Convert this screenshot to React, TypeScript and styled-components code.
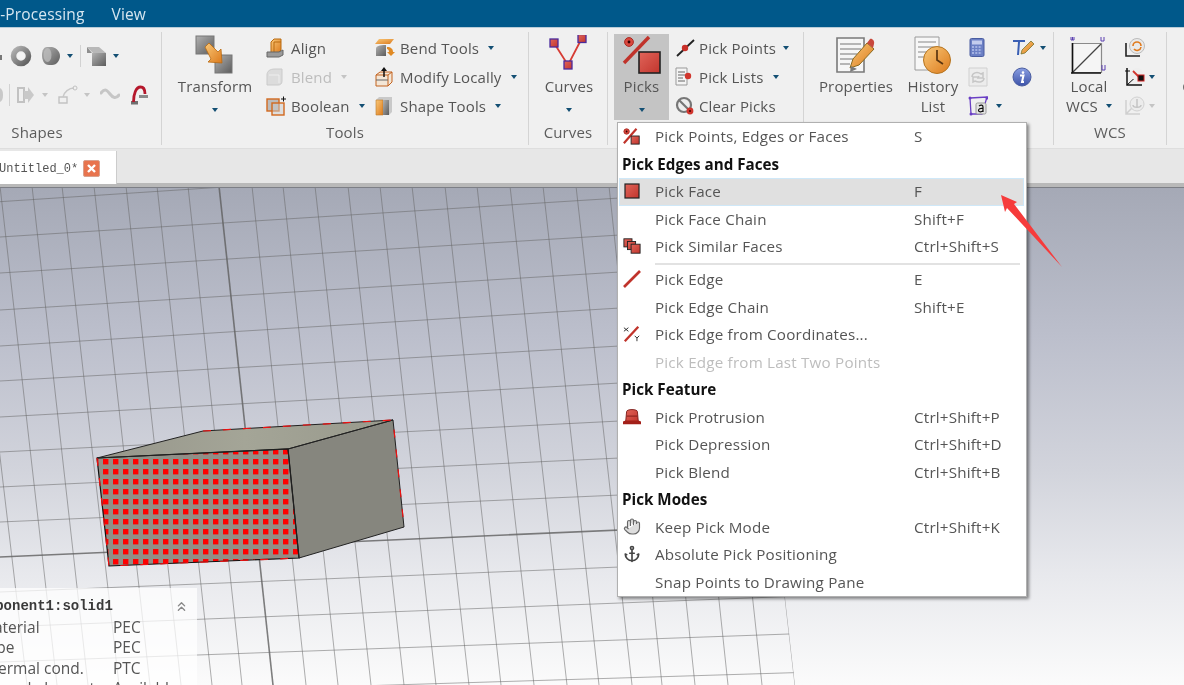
import React from 'react';
import styled, { createGlobalStyle } from 'styled-components';
import { Anchor, ChevronsUp, Hand } from 'lucide-react';

const Global = createGlobalStyle`
  html, body { margin: 0; padding: 0; height: 100%; overflow: hidden; background: #f0f0f0; }
  body { font-family: "Open Sans", "Noto Sans", "Liberation Sans", sans-serif; }
  * { box-sizing: border-box; }
`;

const Page = styled.div`
  position: relative; width: 100%; height: 100vh; overflow: hidden; filter: blur(0.3px);
  display: flex; flex-direction: column; font-size: 15px; letter-spacing: 0.15px; color: #555;
`;
const Defs = styled.svg`width: 0; height: 0; flex: none;`;
const MenuBar = styled.div`
  height: 28px; flex: none; background: #00588a; border-bottom: 1px solid #b8ccd8;
  display: flex; align-items: center; color: #d6e6f0; font-size: 15.5px; margin-left: -32px; gap: 27px; white-space: nowrap;
`;
const Ribbon = styled.div`
  height: 120px; flex: none; background: #f0f0f0; display: flex; padding: 4px 0 3px; overflow: hidden;
`;
const Group = styled.div<{ $w: number; $ml?: number }>`
  flex: none; width: ${p => p.$w}px; margin-left: ${p => p.$ml ?? 0}px;
  border-right: 1px solid #d4d4d4; display: flex; flex-direction: column;
`;
const Content = styled.div<{ $pl?: number }>`
  height: 88px; flex: none; padding: 2px 0 0 ${p => p.$pl ?? 0}px; display: flex; position: relative;
`;
const GroupLabel = styled.div`
  height: 21px; line-height: 21px; margin-top: 2px; text-align: center; color: #5c5c5c;
`;
const Large = styled.div<{ $w: number; $ml?: number; $active?: boolean }>`
  flex: none; width: ${p => p.$w}px; height: 86px; margin-left: ${p => p.$ml ?? 0}px;
  background: ${p => (p.$active ? '#c4c4c4' : 'transparent')};
  display: flex; flex-direction: column; align-items: center; white-space: nowrap;
`;
const LargeIcon = styled.div`height: 42px; flex: none; display: flex; align-items: center; justify-content: center;`;
const LargeText = styled.div`height: 20px; line-height: 20px; flex: none; display: flex; align-items: center; gap: 8px;`;
const CaretBox = styled.div`height: 28px; flex: none; display: flex; align-items: center;`;
const Caret = styled.span<{ $off?: boolean; $ml?: number }>`
  flex: none; display: inline-block; width: 0; height: 0; margin-left: ${p => p.$ml ?? 0}px;
  border-left: 3.5px solid transparent; border-right: 3.5px solid transparent;
  border-top: 4px solid ${p => (p.$off ? '#c4c4c4' : '#134f73')};
`;
const SmallCol = styled.div<{ $w: number; $ml?: number }>`
  flex: none; width: ${p => p.$w}px; margin-left: ${p => p.$ml ?? 0}px; margin-top: -1px; display: flex; flex-direction: column;
`;
const SmallRow = styled.div<{ $off?: boolean; $gap?: number }>`
  height: 29px; flex: none; display: flex; align-items: center; gap: ${p => p.$gap ?? 7}px; white-space: nowrap;
  color: ${p => (p.$off ? '#bdbdbd' : '#555')};
  svg { flex: none; }
`;
const ShapeRows = styled.div`display: flex; flex-direction: column; gap: 16px; padding-top: 10px;`;
const ShapeRow = styled.div`display: flex; align-items: center; height: 23px;`;
const Spot = styled.span<{ $ml?: number }>`display: flex; flex: none; margin-left: ${p => p.$ml ?? 0}px;`;
const ThinSep = styled.span<{ $ml: number }>`flex: none; width: 1px; height: 22px; background: #d2d2d2; margin-left: ${p => p.$ml}px;`;
const TabBar = styled.div`
  height: 39px; flex: none; background: #e7e7e7; border-top: 1px solid #dedede; padding-top: 2px;
  border-bottom: 4px solid #b9b9b9; display: flex; align-items: flex-start;
`;
const Tab = styled.div`
  width: 117px; height: 33px; padding-top: 2px; background: #fff; display: flex; align-items: center; overflow: hidden; flex: none;
  font-family: "Liberation Mono", monospace; font-size: 12px; letter-spacing: 0; color: #555; border-right: 1px solid #ccc;
`;
const TabTitle = styled.span`margin-left: -1px; flex: none; width: 84px; white-space: nowrap;`;
const TabClose = styled.span`
  width: 17px; height: 17px; background: #e8744e; border: 1px solid #d9a18e; border-radius: 2px;
  display: flex; align-items: center; justify-content: center; flex: none;
`;
const View3D = styled.div`
  flex: 1; position: relative; overflow: hidden; border-top: 1px solid #7d7f86;
  background: linear-gradient(#a5a9b6 0%, #bcbfcc 30%, #d2d4dc 57%, #e8e9ed 78%, #fbfbfb 100%);
`;
const Scene = styled.svg`position: absolute; inset: 0; width: 100%; height: 100%;`;
const InfoPanel = styled.div`
  position: absolute; left: 0; top: 400px; bottom: 0; width: 197px; background: rgba(255,255,255,.74);
  overflow: hidden; padding-top: 9px; color: #555; font-size: 15.5px; letter-spacing: 0;
`;
const InfoTitle = styled.div`
  height: 18px; display: flex; align-items: center; justify-content: space-between; margin-left: -30px; padding-right: 8px;
  font-family: "Liberation Mono", monospace; font-weight: 700; font-size: 14px; color: #3a3a3a; margin-bottom: 2px; white-space: nowrap;
`;
const InfoRow = styled.div`height: 20.3px; line-height: 20.3px; display: grid; grid-template-columns: 133px 1fr; margin-left: -20px; white-space: nowrap;`;
const PopMenu = styled.div`
  position: absolute; left: 617px; top: 122px; width: 410px; height: 475px; background: #fff; border: 1px solid #b0b0b0;
  box-shadow: 2px 2px 3px rgba(0,0,0,.45); color: #555; font-size: 15.2px; letter-spacing: 0.2px;
`;
const MenuRow = styled.div<{ $sel?: boolean; $off?: boolean }>`
  height: 27.5px; margin: 0 2px 0 1px; padding-bottom: 1px; display: grid; grid-template-columns: 35px 259px 1fr; align-items: center; white-space: nowrap;
  border: 1px solid ${p => (p.$sel ? '#cfe8f8' : 'transparent')};
  background: ${p => (p.$sel ? '#e0e0e0' : 'transparent')};
  color: ${p => (p.$off ? '#bdbdbd' : '#555')};
`;
const MenuHead = styled.div`height: 27.5px; line-height: 27.5px; padding-left: 4px; font-weight: 700; color: #111; letter-spacing: 0;`;
const MenuIcon = styled.span`display: flex; margin-left: 3px; width: 18px; height: 18px; align-items: center; justify-content: center;`;
const MenuSep = styled.div`height: 2px; margin: 2px 6px 1.5px 37px; background: #e2e2e2;`;
const Arrow = styled.svg`position: absolute; left: 995px; top: 190px; width: 72px; height: 82px;`;

const S = ({ w, h, children }: { w: number; h: number; children: React.ReactNode }) => (
  <svg width={w} height={h} viewBox={`0 0 ${w} ${h}`}>{children}</svg>
);

const sq = (x: number, y: number) => (
  <rect x={x - 4} y={y - 4} width={8} height={8} fill="url(#gRed)" stroke="#4a2a9c" strokeWidth={1.3} />
);

const Partial1 = () => <S w={2} h={8}><rect width={2} height={5} y={3} fill="#777" /></S>;
const Partial2 = () => <S w={3} h={16}><path d="M0 1c2 1 3 3 3 7s-1 6-3 7z" fill="#c8c8c8" /></S>;
const Torus = () => <S w={22} h={22}><circle cx={11} cy={11} r={7.5} fill="none" stroke="url(#gGray)" strokeWidth={5.5} /><circle cx={11} cy={11} r={3.6} fill="#f4f4f4" /></S>;
const Cyl = () => <S w={19} h={22}><path d="M5 2h5c5 1 8 5 8 9s-3 9-8 9H7C2 20 0 15 0 10 0 5 2 2 5 2z" fill="url(#gGray)" /><ellipse cx={5.500} cy={10} rx={4} ry={7} fill="#bdbdbd" opacity={0.75} /></S>;
const Cube = () => <S w={20} h={22}><path d="M0 2h12l7 6H6z" fill="#b8b8b8" /><path d="M5 8h14v13H5z" fill="url(#gGray)" /><path d="M0 2l5 6v0H0z" fill="#8f8f8f" /></S>;
const Extrude = () => <S w={18} h={20}><path d="M1 3h6v14H1z" fill="none" stroke="#c2c2c2" strokeWidth={2} /><path d="M7 6h4V2l6 8-6 8v-4H7z" fill="#c9c9c9" /></S>;
const Loft = () => <S w={20} h={20}><path d="M1 12h8v6H1z" fill="none" stroke="#c2c2c2" strokeWidth={1.4} /><path d="M5 12c1-5 6-9 11-9" fill="none" stroke="#c8c8c8" strokeWidth={1.4} /><circle cx={17} cy={3} r={2} fill="none" stroke="#c2c2c2" /></S>;
const Wave = () => <S w={20} h={14}><path d="M1 5c4-5 6-3 9 1s6 5 9 1" fill="none" stroke="#c6c6c6" strokeWidth={3} strokeLinecap="round" /></S>;
const RedArc = () => <S w={18} h={20}><path d="M9 10h9v3H9z" fill="#8a8a8a" /><path d="M1 16h7v3.500H1z" fill="#6f6f6f" /><path d="M3.500 17C3.500 9 6 2 10.500 2c3.500 0 4.500 3 4.500 7" fill="none" stroke="#b5172b" strokeWidth={2.800} /></S>;

const TransformI = () => <S w={40} h={40}><rect x={1} y={1} width={18} height={18} fill="url(#gGray)" stroke="#777" /><rect x={20} y={20} width={17} height={18} fill="url(#gGray)" stroke="#777" /><path d="M10 12l4-4 9 9 3-3 1 14-14-1 3-3z" fill="url(#gOrange)" stroke="#b96a10" strokeWidth={0.8} /></S>;
const AlignI = () => <S w={18} h={20}><path d="M5 4l3-3h7v11l-3 3H5z" fill="url(#gOrange)" stroke="#b96a10" /><path d="M8 4h7M8 4v11" stroke="#b96a10" fill="none" /><path d="M1 14h12l4-2v5l-4 2H1z" fill="#9a9a9a" stroke="#666" /></S>;
const BlendI = () => <S w={18} h={20}><path d="M1 8c0-4 3-6 8-6h7v12c0 3-2 4-4 4H1z" fill="#dcdcdc" stroke="#cacaca" /><path d="M3 8h10v8" fill="none" stroke="#eee" /></S>;
const BoolI = () => <S w={20} h={20}><rect x={1} y={3} width={12} height={12} fill="#bbb" stroke="#d2691e" strokeWidth={1.4} /><rect x={6} y={7} width={12} height={12} fill="#ccc" fillOpacity={0.5} stroke="#d2691e" strokeWidth={1.4} /><path d="M15 3h5M17.500.5v5" stroke="#111" /></S>;
const BendI = () => <S w={20} h={20}><path d="M4 1h15l-4 5H0z" fill="url(#gOrange)" /><path d="M1 18V11c0-3 3-4 10-4v11z" fill="url(#gGray)" /><path d="M12 9c4 0 6 2 6 5h2l-4 4-4-4h2c0-2-1-3-2-3z" fill="#e08a24" /></S>;
const ModI = () => <S w={18} h={20}><path d="M1 8h12v11H1zM1 8l4-3h12v10l-4 4M13 8l4-3" fill="#f3e6d6" stroke="#c2621f" /><path d="M1 13h12" stroke="#666" /><path d="M9 0l3 4H6z" fill="#111" /><path d="M9 3v7" stroke="#111" strokeWidth={1.5} /></S>;
const ShapeToolI = () => <S w={18} h={20}><path d="M1 4l3-3h13v15l-3 3H1z" fill="#c9c9c9" /><path d="M1 4h7v15H1z" fill="url(#gOrange)" stroke="#bd7a2a" strokeWidth={0.6} /><path d="M8 4h6v15H8z" fill="url(#gGray)" /></S>;
const CurvesI = () => <S w={40} h={40}><path d="M5 8l14 22L33 3" fill="none" stroke="#d63c34" strokeWidth={1.8} />{sq(5, 8)}{sq(33, 3.500)}{sq(19, 30)}</S>;
const PicksI = () => <S w={40} h={40}><path d="M2 28L27 2" stroke="#c0332b" strokeWidth={3.4} /><circle cx={7} cy={7} r={4.4} fill="#d9473d" stroke="#a92a23" /><circle cx={7} cy={7} r={1.4} fill="#300" /><rect x={17} y={17} width={21} height={21} fill="url(#gRed)" stroke="#222" strokeWidth={1.6} /></S>;
const PPointI = () => <S w={20} h={20}><path d="M2 18L19 2" stroke="#222" strokeWidth={1.8} /><circle cx={10} cy={10} r={3.2} fill="#c9302a" /></S>;
const PListI = () => <S w={18} h={20}><path d="M1 1h11v17H1z" fill="#f4f4f4" stroke="#999" /><path d="M3 5h7M3 8h7M3 11h5M3 14h7" stroke="#666" /><circle cx={13} cy={9} r={3.2} fill="#d0352d" /></S>;
const PClearI = () => <S w={20} h={20}><circle cx={9} cy={9} r={7} fill="#eee" stroke="#777" strokeWidth={2.2} /><path d="M4 4l11 11" stroke="#777" strokeWidth={2.2} /><circle cx={15} cy={15} r={3.4} fill="#d0352d" /><circle cx={15} cy={15} r={1} fill="#400" /></S>;
const PropsI = () => <S w={40} h={38}><path d="M1 2h27v34H1z" fill="#f6f6f6" stroke="#7a7a7a" strokeWidth={1.6} /><path d="M4 8h21M4 13h21M4 18h17M4 23h13M4 28h10" stroke="#777" strokeWidth={1.2} /><path d="M14 32l3-9 14-16 7 6-15 16z" fill="url(#gOrange)" stroke="#8a6a20" /><path d="M31 7l3-4c2-1 5 2 4 5l-1 4z" fill="#c8483c" /><path d="M14 36l1-6 6 3z" fill="#7a7a7a" /></S>;
const HistI = () => <S w={38} h={38}><path d="M1 1h24v33H1z" fill="#f7f7f7" stroke="#9a9a9a" /><path d="M4 6h18M4 11h18M4 16h12M4 21h8" stroke="#888" strokeWidth={1.1} /><circle cx={23} cy={24} r={13.5} fill="url(#gOrange)" stroke="#b5741f" /><path d="M23 14v10l6 4" fill="none" stroke="#5a3510" strokeWidth={1.7} /></S>;
const CalcI = () => <S w={18} h={20}><rect x={2} y={0.500} width={14} height={18} rx={1.500} fill="#6b7fc4" stroke="#4a5da0" /><rect x={4} y={2.500} width={10} height={4} fill="#c3cced" /><path d="M4 9h10M4 12h10M4 15h10" stroke="#b6c2ec" strokeWidth={1.6} strokeDasharray="2 1.300" /></S>;
const SyncI = () => <S w={20} h={20}><path d="M1 1h18v18H1z" fill="#ececec" stroke="#d0d0d0" /><path d="M4 10c0-4 5-6 9-3l2-1v5h-5l1-2M16 11c0 4-5 5-9 3l-2 1v-5h5" fill="none" stroke="#c6c6c6" strokeWidth={1.5} /></S>;
const AreaI = () => <S w={20} h={20}><path d="M2 2l17-1-5 17H3z" fill="none" stroke="#6a3fc4" strokeWidth={1.3} /><circle cx={2} cy={2} r={1.500} fill="#6a3fc4" /><circle cx={19} cy={2} r={1.500} fill="#6a3fc4" /><circle cx={3} cy={18} r={1.500} fill="#6a3fc4" /><rect x={8} y={7} width={10} height={11} rx={1.500} fill="#e4e4e4" stroke="#999" /><path d="M11 10c2-1.500 4-1 4 1v5M15 12.500c-3-.5-4.500.5-4.500 2s3 2 4.500 0" fill="none" stroke="#111" strokeWidth={1.2} /></S>;
const TextI = () => <S w={22} h={20}><path d="M1 2h12v2H8l-1 13H5L6 4H1z" fill="#3a5fb4" /><path d="M9 16l1-4 9-9 3 3-9 9z" fill="url(#gOrange)" stroke="#6a6a20" strokeWidth={0.7} /></S>;
const InfoI = () => <S w={20} h={20}><circle cx={10} cy={10} r={9} fill="url(#gBlue)" stroke="#4a5da0" /><path d="M11 5.500v.1" stroke="#fff" strokeWidth={2.600} strokeLinecap="round" /><path d="M8 8.500h3.500l-1.500 6.500h2" fill="none" stroke="#fff" strokeWidth={2} /></S>;
const WcsI = () => <S w={38} h={38}><path d="M2.500 7.500h29v29h-29z" fill="#f5f5f5" stroke="#8a8a8a" strokeWidth={1.200} /><path d="M2 37L31 8" stroke="#444" strokeWidth={1.200} /><path d="M1 37h30M2.500 37V7" stroke="#111" strokeWidth={1.600} /><path d="M1 1v3h1.500V1M4 1v3H2.500" fill="none" stroke="#5a3fb0" /><path d="M31 1v4h3V1" fill="none" stroke="#5a3fb0" /><path d="M32 29v5h3v-5" fill="none" stroke="#5a3fb0" /></S>;
const Wcs1 = () => <S w={22} h={20}><path d="M2 5v13h14" fill="none" stroke="#222" strokeWidth={1.600} /><circle cx={13} cy={8} r={7.500} fill="#e9e9e9" stroke="#bbb" /><path d="M9 8a4 4 0 0 1 8 0M17 9a4 4 0 0 1-7 2" fill="none" stroke="#e07a1e" strokeWidth={1.600} /></S>;
const Wcs2 = () => <S w={22} h={20}><path d="M3 1v17h15" fill="none" stroke="#111" strokeWidth={1.500} /><path d="M1 4h5M3 18L16 6" stroke="#111" /><circle cx={13} cy={7} r={6} fill="#eee" /><path d="M9 4l8 8" stroke="#d0352d" strokeWidth={1.800} /><rect x={14} y={8} width={6} height={6} fill="#111" stroke="#c22" /></S>;
const Wcs3 = () => <S w={22} h={20}><path d="M2 4v14h14M2 18L9 11" fill="none" stroke="#cfcfcf" strokeWidth={1.500} /><circle cx={13} cy={8} r={7} fill="#ececec" stroke="#d2d2d2" /><path d="M13 3v8M9 9c0 3 8 3 8 0" fill="none" stroke="#c4c4c4" strokeWidth={1.500} /></S>;

const MPick = () => <S w={20} h={18}><path d="M1 17L15 1" stroke="#c0332b" strokeWidth={2.400} /><circle cx={4} cy={4} r={3} fill="#d9473d" stroke="#a92a23" /><circle cx={4} cy={4} r={1} fill="#300" /><rect x={9} y={9} width={9} height={9} fill="url(#gRed)" stroke="#222" /></S>;
const MFace = () => <S w={18} h={18}><rect x={2} y={2} width={14} height={14} fill="url(#gRed)" stroke="#222" strokeWidth={1.200} /></S>;
const MSimilar = () => <S w={20} h={18}><rect x={1} y={1} width={9} height={9} fill="url(#gRed)" stroke="#222" /><rect x={5} y={4} width={9} height={9} fill="url(#gRed)" stroke="#222" /><rect x={9} y={7} width={10} height={10} fill="url(#gRed)" stroke="#222" /></S>;
const MEdge = () => <S w={18} h={18}><path d="M1 17L17 1" stroke="#c0332b" strokeWidth={2.600} /></S>;
const MCoord = () => <S w={20} h={18}><path d="M2 17L17 1" stroke="#c0332b" strokeWidth={2.600} /><path d="M1 2l5 4M6 2l-5 4M13 11l2.500 2.500L18 11M15.500 13.500V17" stroke="#222" fill="none" /></S>;
const MHat = () => <S w={20} h={18}><path d="M4 3c0-3 12-3 12 0l1 11H3z" fill="url(#gRed)" stroke="#7a1a16" /><path d="M0 14c2-1 4-1 4-1h12s2 0 4 1v3H0z" fill="#a32019" /><path d="M4 8h12" stroke="#7a1a16" /></S>;

const Vtop = [-32, 0, 32, 62, 94, 126, 157, 188, 219, 252, 283, 315, 348, 380, 412, 445, 477, 510, 543, 576, 609, 642, 675, 708, 738];
const Vbot = [27, 57, 88, 119, 150, 181, 212, 242, 273, 306, 338, 371, 404, 436, 469, 501, 534, 567, 599, 632, 662, 695, 728, 762, 795];
const HL = [201.7, 237, 273, 310, 346, 381, 417, 452, 487, 522, 557, 592, 627, 662, 697];
const HR = [161, 198, 235, 272, 308, 346, 383, 421, 458, 495, 530, 567, 603, 640, 678];

const Front = '97,458 288,449 299,558 109,566';
const RightFace = '288,449 393,420 404,527 299,558';
const TopFace = '97,458 203,431 393,420 288,449';

const Scene3D = () => (
  <Scene viewBox="0 188 1184 497" preserveAspectRatio="none">
    <defs>
      <clipPath id="gridClip"><polygon points="-40,186 738,186 795,685 -40,685" /></clipPath>
      <clipPath id="frontClip"><polygon points={Front} /></clipPath>
      <pattern id="stipple" patternUnits="userSpaceOnUse" x={103} y={449} width={10} height={10}>
        <rect width={5.400} height={5.400} fill="#ff0000" />
      </pattern>
      <linearGradient id="topFace" x1="0" y1="0" x2="1" y2="0">
        <stop offset="0" stopColor="#96968b" /><stop offset="0.5" stopColor="#a4a597" /><stop offset="1" stopColor="#98998c" />
      </linearGradient>
    </defs>
    <g clipPath="url(#gridClip)" fill="none">
      {Vtop.map((x, i) => (
        <line key={i} x1={x} y1={186} x2={Vbot[i]} y2={685} stroke={i === 8 ? '#5f5f5f' : '#666'} strokeOpacity={i === 8 ? 0.8 : 0.52} strokeWidth={i === 8 ? 1.6 : 1} />
      ))}
      {HL.map((y, i) => {
        const k = (HR[i] - y) / 620;
        return <line key={i} x1={0} y1={y} x2={800} y2={y + k * 800} stroke={i === 10 ? '#5f5f5f' : '#666'} strokeOpacity={i === 10 ? 0.8 : 0.52} strokeWidth={i === 10 ? 1.6 : 1} />;
      })}
    </g>
    <polygon points={TopFace} fill="url(#topFace)" />
    <polygon points={RightFace} fill="#86867e" />
    <polygon points={Front} fill="#908f87" />
    <rect x={90} y={440} width={220} height={130} fill="url(#stipple)" clipPath="url(#frontClip)" />
    <polygon points={Front} fill="none" stroke="#111" strokeWidth={1.200} />
    <polygon points={RightFace} fill="none" stroke="#222" strokeWidth={1} />
    <polygon points={TopFace} fill="none" stroke="#222" strokeWidth={1} />
    <path d="M203 431L393 420L404 527M97 458L109 566L299 558" fill="none" stroke="#f01010" strokeWidth={1.200} strokeDasharray="8 12" />
  </Scene>
);

const menu: Array<{ k: 'row' | 'head' | 'sep'; t?: string; s?: string; i?: React.ReactNode; sel?: boolean; off?: boolean }> = [
  { k: 'row', t: 'Pick Points, Edges or Faces', s: 'S', i: <MPick /> },
  { k: 'head', t: 'Pick Edges and Faces' },
  { k: 'row', t: 'Pick Face', s: 'F', i: <MFace />, sel: true },
  { k: 'row', t: 'Pick Face Chain', s: 'Shift+F' },
  { k: 'row', t: 'Pick Similar Faces', s: 'Ctrl+Shift+S', i: <MSimilar /> },
  { k: 'sep' },
  { k: 'row', t: 'Pick Edge', s: 'E', i: <MEdge /> },
  { k: 'row', t: 'Pick Edge Chain', s: 'Shift+E' },
  { k: 'row', t: 'Pick Edge from Coordinates...', i: <MCoord /> },
  { k: 'row', t: 'Pick Edge from Last Two Points', off: true },
  { k: 'head', t: 'Pick Feature' },
  { k: 'row', t: 'Pick Protrusion', s: 'Ctrl+Shift+P', i: <MHat /> },
  { k: 'row', t: 'Pick Depression', s: 'Ctrl+Shift+D' },
  { k: 'row', t: 'Pick Blend', s: 'Ctrl+Shift+B' },
  { k: 'head', t: 'Pick Modes' },
  { k: 'row', t: 'Keep Pick Mode', s: 'Ctrl+Shift+K', i: <Hand size={19} color="#666" fill="#ddd" strokeWidth={1.5} /> },
  { k: 'row', t: 'Absolute Pick Positioning', i: <Anchor size={18} color="#444" strokeWidth={2.2} /> },
  { k: 'row', t: 'Snap Points to Drawing Pane' },
];

const info = [['Material', 'PEC'], ['Type', 'PEC'], ['Thermal cond.', 'PTC'], ['Curved elements', 'Available']];

export default function App() {
  return (
    <Page>
      <Global />
      <Defs>
        <defs>
          <linearGradient id="gGray" x1="0" y1="0" x2="1" y2="1"><stop offset="0" stopColor="#b2b2b2" /><stop offset="1" stopColor="#5c5c5c" /></linearGradient>
          <linearGradient id="gOrange" x1="0" y1="0" x2="1" y2="1"><stop offset="0" stopColor="#f9c878" /><stop offset="1" stopColor="#dc7a1c" /></linearGradient>
          <linearGradient id="gRed" x1="0" y1="0" x2="1" y2="1"><stop offset="0" stopColor="#e0655a" /><stop offset="1" stopColor="#c2352d" /></linearGradient>
          <linearGradient id="gBlue" x1="0" y1="0" x2="0" y2="1"><stop offset="0" stopColor="#8a9fe2" /><stop offset="1" stopColor="#3c52a8" /></linearGradient>
        </defs>
      </Defs>
      <MenuBar><span>Post-Processing</span><span>View</span></MenuBar>
      <Ribbon>
        <Group $w={249} $ml={-87}>
          <Content $pl={87}>
            <ShapeRows>
              <ShapeRow>
                <Spot><Partial1 /></Spot><Spot $ml={8}><Torus /></Spot><Spot $ml={10}><Cyl /></Spot><Caret $ml={6} /><ThinSep $ml={7} /><Spot $ml={6}><Cube /></Spot><Caret $ml={6} />
              </ShapeRow>
              <ShapeRow>
                <Spot><Partial2 /></Spot><ThinSep $ml={6} /><Spot $ml={7}><Extrude /></Spot><Caret $off $ml={7} /><Spot $ml={10}><Loft /></Spot><Caret $off $ml={6} /><Spot $ml={10}><Wave /></Spot><Spot $ml={10}><RedArc /></Spot>
              </ShapeRow>
            </ShapeRows>
          </Content>
          <GroupLabel>Shapes</GroupLabel>
        </Group>
        <Group $w={367}>
          <Content>
            <Large $w={74} $ml={16}><LargeIcon><TransformI /></LargeIcon><LargeText>Transform</LargeText><CaretBox><Caret /></CaretBox></Large>
            <SmallCol $w={109} $ml={14}>
              <SmallRow><AlignI />Align</SmallRow>
              <SmallRow $off><BlendI />Blend<Caret $off $ml={2} /></SmallRow>
              <SmallRow $gap={5}><BoolI />Boolean<Caret $ml={4} /></SmallRow>
            </SmallCol>
            <SmallCol $w={150}>
              <SmallRow $gap={5}><BendI />Bend Tools<Caret $ml={4} /></SmallRow>
              <SmallRow><ModI />Modify Locally<Caret $ml={2} /></SmallRow>
              <SmallRow><ShapeToolI />Shape Tools<Caret $ml={2} /></SmallRow>
            </SmallCol>
          </Content>
          <GroupLabel>Tools</GroupLabel>
        </Group>
        <Group $w={79}>
          <Content>
            <Large $w={60} $ml={10}><LargeIcon><CurvesI /></LargeIcon><LargeText>Curves</LargeText><CaretBox><Caret /></CaretBox></Large>
          </Content>
          <GroupLabel>Curves</GroupLabel>
        </Group>
        <Group $w={196}>
          <Content>
            <Large $w={55} $ml={6} $active><LargeIcon><PicksI /></LargeIcon><LargeText>Picks</LargeText><CaretBox><Caret /></CaretBox></Large>
            <SmallCol $w={125} $ml={6}>
              <SmallRow $gap={4}><PPointI />Pick Points<Caret $ml={3} /></SmallRow>
              <SmallRow $gap={6}><PListI />Pick Lists<Caret $ml={3} /></SmallRow>
              <SmallRow $gap={4}><PClearI />Clear Picks</SmallRow>
            </SmallCol>
          </Content>
        </Group>
        <Group $w={250}>
          <Content>
            <Large $w={72} $ml={16}><LargeIcon><PropsI /></LargeIcon><LargeText>Properties</LargeText></Large>
            <Large $w={56} $ml={13}><LargeIcon><HistI /></LargeIcon><LargeText>History</LargeText><LargeText>List</LargeText></Large>
            <SmallCol $w={44} $ml={7}>
              <SmallRow><CalcI /></SmallRow>
              <SmallRow><SyncI /></SmallRow>
              <SmallRow><AreaI /><Caret $ml={1} /></SmallRow>
            </SmallCol>
            <SmallCol $w={36}>
              <SmallRow><TextI /><Caret $ml={-1} /></SmallRow>
              <SmallRow><InfoI /></SmallRow>
            </SmallCol>
          </Content>
        </Group>
        <Group $w={113}>
          <Content>
            <Large $w={50} $ml={10}><LargeIcon><WcsI /></LargeIcon><LargeText>Local</LargeText><LargeText>WCS<Caret /></LargeText></Large>
            <SmallCol $w={40} $ml={10}>
              <SmallRow><Wcs1 /></SmallRow>
              <SmallRow $gap={3}><Wcs2 /><Caret /></SmallRow>
              <SmallRow $gap={3}><Wcs3 /><Caret $off /></SmallRow>
            </SmallCol>
          </Content>
          <GroupLabel>WCS</GroupLabel>
        </Group>
        <Group $w={30}>
          <Content><Large $w={16} $ml={12}><LargeIcon /><LargeText>C</LargeText></Large></Content>
        </Group>
      </Ribbon>
      <TabBar>
        <Tab>
          <TabTitle>Untitled_0*</TabTitle>
          <TabClose><S w={11} h={11}><path d="M2 2l7 7M9 2l-7 7" stroke="#fff" strokeWidth={2.400} /></S></TabClose>
        </Tab>
      </TabBar>
      <View3D>
        <Scene3D />
        <InfoPanel>
          <InfoTitle><span>Component1:solid1</span><ChevronsUp size={15} color="#888" strokeWidth={2.200} /></InfoTitle>
          {info.map(([a, b]) => <InfoRow key={a}><span>{a}</span><span>{b}</span></InfoRow>)}
        </InfoPanel>
      </View3D>
      <PopMenu>
        {menu.map((m, i) => {
          if (m.k === 'sep') return <MenuSep key={i} />;
          if (m.k === 'head') return <MenuHead key={i}>{m.t}</MenuHead>;
          return (
            <MenuRow key={i} $sel={m.sel} $off={m.off}>
              <MenuIcon>{m.i}</MenuIcon><span>{m.t}</span><span>{m.s}</span>
            </MenuRow>
          );
        })}
      </PopMenu>
      <Arrow viewBox="995 190 72 82"><polygon points="1001,195 1017,202 1014,204 1062,267 1007,208 1005,212" fill="#f63b3b" /></Arrow>
    </Page>
  );
}
